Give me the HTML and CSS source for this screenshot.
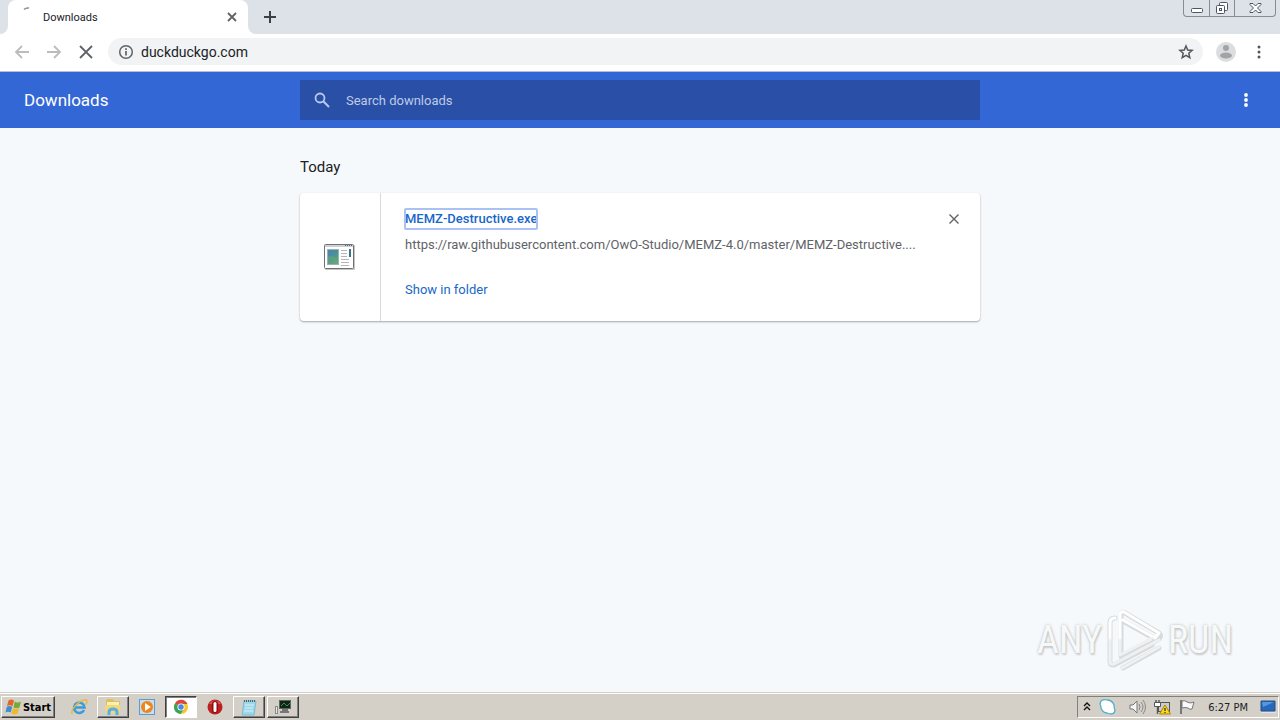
FILE: index.html
```html
<!DOCTYPE html>
<html lang="en">
<head>
    <meta charset="UTF-8">
    <meta name="viewport" content="width=device-width, initial-scale=1.0">
    <title>Downloads</title>
    <link rel="stylesheet" href="styles.css">
</head>
<body>
    <div class="tab-strip">
        <div class="tab-edge"></div>
        <div class="tab">
            <svg class="spinner" width="16" height="16" viewBox="0 0 16 16"><path d="M5 4.500Q7 2.500 10 3" fill="none" stroke="#8a8d91" stroke-width="1.500"/></svg>
            <span class="tab-title">Downloads</span>
            <button class="icon-button tab-close" aria-label="Close tab">
                <svg width="10" height="10" viewBox="0 0 10 10"><path d="M1 1l8 8M9 1l-8 8" stroke="#5f6368" stroke-width="1.800"/></svg>
            </button>
        </div>
        <div class="tab-edge right"></div>
        <button class="icon-button new-tab" aria-label="New tab">
            <svg width="12" height="12" viewBox="0 0 12 12"><path d="M6 0v12M0 6h12" stroke="#3c4043" stroke-width="2"/></svg>
        </button>
        <div class="window-controls">
            <button class="icon-button" aria-label="Minimize">
                <svg width="14" height="14" viewBox="0 0 14 14"><rect x="1.500" y="7.500" width="11" height="4" rx="1" fill="#fff" stroke="#4d5564"/></svg>
            </button>
            <button class="icon-button" aria-label="Restore">
                <svg width="14" height="14" viewBox="0 0 14 14" fill="#fff" stroke="#4d5564"><rect x="4.500" y="1.500" width="8" height="8" rx="1"/><rect x="1.500" y="4.500" width="8" height="8" rx="1"/><rect x="4.500" y="7.500" width="2" height="2"/></svg>
            </button>
            <button class="icon-button wide" aria-label="Close">
                <svg width="13" height="12" viewBox="0 0 13 12"><path d="M1 1.500h3l2.500 2.500L9 1.500h3v1L8.500 6l3.500 3.500v1H9L6.500 8 4 10.500H1v-1L4.500 6 1 2.500z" fill="#fff" stroke="#4d5564"/></svg>
            </button>
        </div>
    </div>

    <div class="toolbar">
        <button class="icon-button nav" aria-label="Back">
            <svg width="16" height="16" viewBox="0 0 16 16"><path d="M15 8H2M8 2L2 8l6 6" fill="none" stroke="#babcbe" stroke-width="1.800"/></svg>
        </button>
        <button class="icon-button nav" aria-label="Forward">
            <svg width="16" height="16" viewBox="0 0 16 16"><path d="M1 8h13M8 2l6 6-6 6" fill="none" stroke="#babcbe" stroke-width="1.800"/></svg>
        </button>
        <button class="icon-button nav" aria-label="Stop">
            <svg width="14" height="14" viewBox="0 0 14 14"><path d="M1 1l12 12M13 1L1 13" stroke="#5f6368" stroke-width="1.800"/></svg>
        </button>
        <div class="omnibox">
            <svg width="16" height="16" viewBox="0 0 16 16"><circle cx="8" cy="8" r="6.300" fill="none" stroke="#5f6368" stroke-width="1.500"/><path d="M8 7v4.500M8 4.200v1.700" stroke="#5f6368" stroke-width="1.700"/></svg>
            <input class="address" type="text" value="duckduckgo.com" aria-label="Address">
            <button class="icon-button" aria-label="Bookmark">
                <svg width="16" height="16" viewBox="0 0 16 16"><path d="M8 2l1.700 4 4.400.4-3.300 2.900 1 4.300L8 11.300l-3.800 2.300 1-4.300L1.900 6.400 6.300 6z" fill="none" stroke="#53575c" stroke-width="1.500"/></svg>
            </button>
        </div>
        <button class="icon-button" aria-label="Profile">
            <svg width="20" height="20" viewBox="0 0 20 20"><circle cx="10" cy="10" r="10" fill="#dcdddf"/><circle cx="10" cy="6" r="3" fill="#a1a3a6"/><ellipse cx="10" cy="13.500" rx="6" ry="3" fill="#a1a3a6"/></svg>
        </button>
        <button class="icon-button menu" aria-label="Browser menu">
            <svg width="4" height="14" viewBox="0 0 4 14" fill="#53575c"><circle cx="2" cy="2" r="1.500"/><circle cx="2" cy="7" r="1.500"/><circle cx="2" cy="12" r="1.500"/></svg>
        </button>
    </div>

    <header class="header">
        <h1>Downloads</h1>
        <div class="search">
            <svg width="16" height="16" viewBox="0 0 16 16"><circle cx="6" cy="6" r="4.500" fill="none" stroke="#b9c9ee" stroke-width="1.800"/><path d="M9.300 9.300L15 15" stroke="#b9c9ee" stroke-width="2"/></svg>
            <input type="search" placeholder="Search downloads" aria-label="Search downloads">
        </div>
        <div class="header-right">
            <button class="icon-button" aria-label="More actions">
                <svg width="4" height="14" viewBox="0 0 4 14" fill="#fff"><circle cx="2" cy="2" r="1.900"/><circle cx="2" cy="7" r="1.900"/><circle cx="2" cy="12" r="1.900"/></svg>
            </button>
        </div>
    </header>

    <main class="content">
        <h2>Today</h2>
        <div class="card">
            <div class="file-icon">
                <svg width="32" height="28" viewBox="0 0 32 28">
                    <defs><linearGradient id="screen" x1="0" y1="0" x2="1" y2="1"><stop offset="0" stop-color="#4a82b4"/><stop offset=".55" stop-color="#4b9390"/><stop offset="1" stop-color="#72b56b"/></linearGradient></defs>
                    <rect x="2" y="2" width="30" height="25" rx="1" fill="#c4c4c4"/>
                    <rect x="1.500" y="1.500" width="29" height="24" rx="1" fill="#fff" stroke="#6e7274"/>
                    <path d="M2 3h28" stroke="#cdd0d6" stroke-width="2"/>
                    <path d="M22 2.500h7" stroke="#5b6470" stroke-dasharray="1 1"/>
                    <rect x="4.500" y="6.500" width="11" height="15" fill="url(#screen)" stroke="#99b1b8"/>
                    <path d="M5 14c4-3 7 0 10 4v3H5z" fill="#67a779" opacity=".6"/>
                    <path d="M18 7.500h6M18 10.500h6M18 13.500h6M18 16.500h8M18 19.500h8M18 22.500h8" stroke="#b5b5b5"/>
                    <rect x="26" y="6" width="2" height="8" fill="#357688"/>
                </svg>
            </div>
            <div class="details">
                <div class="name-row">
                    <a class="file-name" href="#">MEMZ-Destructive.exe</a>
                    <button class="icon-button" aria-label="Remove from list">
                        <svg width="10" height="10" viewBox="0 0 10 10"><path d="M.5.5l9 9M9.500.5l-9 9" stroke="#5f6368" stroke-width="1.400"/></svg>
                    </button>
                </div>
                <div class="url">https://raw.githubusercontent.com/OwO-Studio/MEMZ-4.0/master/MEMZ-Destructive....</div>
                <a class="show" href="#">Show in folder</a>
            </div>
        </div>
        <div class="watermark">
            <span>ANY</span>
            <svg width="58" height="64" viewBox="0 0 58 64" fill="none" stroke-linejoin="round" stroke-linecap="round">
                <g stroke="#d8dbdd" stroke-width="5"><path d="M9 10q-5 0-5 5v39q0 3 4 3l38-20"/><path d="M15 48V7q0-4 4-2l34 20q3 3 0 6"/><path d="M17 13l34 19M16 50l34-17M17 60l36-20"/></g>
                <g stroke="#fff" stroke-width="3"><path d="M9 10q-5 0-5 5v17M14 32V7q0-4 4-3l35 21-4 5-32-18"/></g>
                <g stroke="#eef0f1" stroke-width="3"><path d="M4 32v22q0 3 4 2l45-24M14 32v15l32-17M16 60l37-21"/></g>
            </svg>
            <span>RUN</span>
        </div>
    </main>

    <footer class="taskbar">
        <button class="task start">
            <svg width="17" height="16" viewBox="0 0 17 16"><path d="M3.500 1.500q3-2 5.500 0L7.500 7.300Q5 5.500 2 7z" fill="#e66526"/><path d="M9.700 2.500q3 2 6.300 0l-1.500 6q-3 1.500-6 0z" fill="#72ad3b"/><path d="M1.700 8q3-2 5.500 0l-1.500 5.500Q3 12 .5 13.500z" fill="#3d8ed0"/><path d="M8 9.200q3 1.500 6.200 0l-1.700 5.500q-3 1.500-6 0z" fill="#f2b62d"/></svg>
            Start
        </button>
        <button class="task flat" aria-label="Internet Explorer">
            <svg width="18" height="18" viewBox="0 0 18 18" fill="none"><path d="M14 12A5.200 5.200 0 1 1 14.500 9.500H5" stroke="#3a9cdb" stroke-width="2.600"/><path d="M2.500 16C-1 13 9 2 15.500 1.800c2.500 0 1.500 3 0 5" stroke="#e9b83c" stroke-width="1.400"/></svg>
        </button>
        <button class="task" aria-label="Explorer">
            <svg width="18" height="18" viewBox="0 0 18 18"><path d="M2 3l1-2h6l1 2h6v12H2z" fill="#e3bd59"/><path d="M3 4h12v4H3z" fill="#fff1b3"/><path d="M1 7h15v8H2z" fill="#f2d77b"/><path d="M5 17v-3q0-3 4-3t4 3v3" fill="none" stroke="#5ab0dd" stroke-width="3"/></svg>
        </button>
        <button class="task flat" aria-label="Media Player">
            <svg width="16" height="16" viewBox="0 0 16 16"><rect x=".5" y=".5" width="15" height="15" fill="#c4dff5" stroke="#5a9dd3"/><circle cx="8" cy="8" r="6" fill="#f28519"/><path d="M6 4L11.800 8 6 12z" fill="#fff"/></svg>
        </button>
        <button class="task active" aria-label="Chrome">
            <svg width="16" height="16" viewBox="0 0 16 16"><circle cx="8" cy="8" r="7" fill="#f4c72d"/><path d="M8 8L2 4.400A7 7 0 0 1 14.500 5H8z" fill="#dc483b"/><path d="M8 8L2 4.400A7 7 0 0 0 7.500 15L11 10z" fill="#37a35a"/><circle cx="8" cy="8" r="3.600" fill="#fff"/><circle cx="8" cy="8" r="2.700" fill="#4687e8"/></svg>
        </button>
        <button class="task flat" aria-label="Opera">
            <svg width="16" height="16" viewBox="0 0 16 16"><circle cx="8" cy="8" r="7.500" fill="#bd2022"/><path d="M2 5a7 7 0 0 1 12 0" fill="#d8534f"/><rect x="5" y="2" width="6" height="12" rx="3" fill="#8a1014"/><rect x="6.500" y="3" width="3" height="10" rx="1.500" fill="#fff"/></svg>
        </button>
        <button class="task" aria-label="Notepad">
            <svg width="16" height="17" viewBox="0 0 16 17"><path d="M3 2h12l-2 14H1z" fill="#9cd8ea" stroke="#7dbccd"/><path d="M4 6h9M4 9h8M3 12h9" stroke="#d6f2f9"/><path d="M3 2h12" stroke="#49656f" stroke-width="2" stroke-dasharray="1 1"/></svg>
        </button>
        <button class="task" aria-label="System monitor">
            <svg width="18" height="16" viewBox="0 0 18 16"><rect x="5.500" y="1.500" width="11" height="8" fill="#112417" stroke="#5c655e"/><path d="M7 7l3-3 3 3 3-3" fill="none" stroke="#2a9a3e"/><path d="M8 10h6v2H8zM6 12h9v2H6z" fill="#777"/><rect x="1.500" y="7.500" width="2" height="7" fill="#e6e8e6" stroke="#8a8a8a"/></svg>
        </button>
        <div class="tray">
            <svg width="8" height="10" viewBox="0 0 8 10"><path d="M1 4l3-3 3 3M1 8l3-3 3 3" fill="none" stroke="#111" stroke-width="1.400"/></svg>
            <svg width="18" height="18" viewBox="0 0 18 18"><path d="M2 3q3-2 6-1 5 0 7 5 0 3 1 5 0 3-3 4-3 0-5-1-4 0-6-5 0-2-1-4z" fill="#fff" stroke="#51acd0" stroke-width="1.300"/></svg>
            <svg class="volume" width="17" height="16" viewBox="0 0 17 16"><path d="M1 6h3l4-4v12l-4-4H1z" fill="#f5f5f5" stroke="#777"/><path d="M10 5q2 3 0 6M12 3q4 5 0 10M14 1q5 7 0 14" fill="none" stroke="#888"/></svg>
            <svg width="17" height="16" viewBox="0 0 17 16"><rect x="4.500" y="3.500" width="11" height="9" fill="#c9ccce" stroke="#555"/><path d="M.5 3.500h6v4h-6z" fill="#fff" stroke="#555"/><path d="M2 1v2M5 1v2M3.500 8v7" fill="none" stroke="#555" stroke-width="1.400"/><path d="M11 6l5.500 9h-11z" fill="#ffd71f" stroke="#aa8500"/><path d="M11 9v3M11 13v1" stroke="#333" stroke-width="1.300"/></svg>
            <svg width="17" height="16" viewBox="0 0 17 16"><path d="M2 1v14" stroke="#777" stroke-width="2"/><path d="M3 2q3-1 5 1 3 2 7 0l-2 7q-2 1-4-1-3-1-6 0z" fill="#fafafa" stroke="#777"/></svg>
            <time class="clock">6:27 PM</time>
            <svg width="16" height="14" viewBox="0 0 16 14"><path d="M1 1h14v10H1z" fill="#2768bb" stroke="#244d88"/><path d="M2 2h12L3 7z" fill="#5599db"/><path d="M1 12.500h15" stroke="#dbe4ef"/></svg>
        </div>
    </footer>
</body>
</html>
```
FILE: styles.css
```css
* {
    margin: 0;
    padding: 0;
    box-sizing: border-box;
}

body {
    display: flex;
    flex-direction: column;
    min-height: 100vh;
    background: #f6f9fc;
    color: #202124;
    font-family: Roboto, sans-serif;
    font-size: 13px;
}

svg {
    display: block;
    flex: none;
}

a {
    color: #1967c8;
    text-decoration: none;
}

input {
    flex: 1;
    min-width: 0;
    border: 0;
    outline: 0;
    background: none;
    font-family: inherit;
}

.icon-button {
    display: flex;
    align-items: center;
    justify-content: center;
    border: 0;
    background: none;
}

/* browser chrome */
.tab-strip {
    display: flex;
    height: 34px;
    background: #dde1e8;
}

.tab-edge {
    width: 8px;
    background: #fff;
}

.tab-edge::before {
    content: "";
    display: block;
    height: 100%;
    border-radius: 0 0 8px 0;
    background: #dde1e8;
}

.tab-edge.right::before {
    border-radius: 0 0 0 8px;
}

.tab {
    display: flex;
    align-items: center;
    width: 240px;
    padding: 0 11px;
    border-radius: 8px 8px 0 0;
    background: #fff;
}

.spinner {
    margin-top: -8px;
}

.tab-title {
    flex: 1;
    padding-left: 8px;
    font-size: 11px;
}

.new-tab {
    width: 28px;
}

.window-controls {
    display: flex;
    height: 17px;
    margin-left: auto;
    margin-right: 4px;
    border: 1px solid #858b98;
    border-top: 0;
    border-radius: 0 0 4px 4px;
}

.window-controls button {
    width: 25px;
}

.window-controls button + button {
    border-left: 1px solid #858b98;
}

.window-controls .wide {
    width: 41px;
}

.toolbar {
    display: flex;
    align-items: center;
    height: 38px;
    padding: 0 12px 2px 6px;
    background: #fff;
    border-bottom: 1px solid #b8c0d0;
}

.nav {
    width: 32px;
    height: 28px;
}

.omnibox {
    display: flex;
    flex: 1;
    align-items: center;
    height: 27px;
    margin: 0 13px 0 6px;
    padding: 0 9px 0 10px;
    border-radius: 14px;
    background: #f1f3f5;
}

.address {
    padding-left: 7px;
    color: #202124;
    font-size: 14px;
}

.menu {
    width: 18px;
    margin-left: 14px;
}

/* downloads page */
.header {
    display: grid;
    grid-template-columns: 1fr 680px 1fr;
    align-items: center;
    height: 56px;
    padding: 0 24px;
    background: #3367d6;
    color: #fff;
}

.header h1 {
    font-size: 17px;
    font-weight: 400;
}

.search {
    display: flex;
    align-items: center;
    height: 40px;
    padding: 0 14px;
    background: #294fa7;
}

.search input {
    padding-left: 16px;
    color: #fff;
    font-size: 13px;
}

.search input::placeholder {
    color: #bfcbe5;
}

.header-right {
    display: flex;
    justify-content: flex-end;
    padding-right: 8px;
}

.content {
    display: flex;
    flex: 1;
    flex-direction: column;
    align-items: center;
    padding-top: 28px;
}

.content h2 {
    width: 680px;
    margin-bottom: 15px;
    font-size: 15px;
    font-weight: 400;
    line-height: 22px;
}

.card {
    display: flex;
    width: 680px;
    height: 128px;
    border-radius: 4px;
    background: #fff;
    box-shadow: 0 1px 2px rgba(60, 64, 67, 0.45);
}

.file-icon {
    display: flex;
    align-items: center;
    justify-content: center;
    width: 81px;
    padding-right: 2px;
    border-right: 1px solid #d9dbde;
}

.details {
    display: flex;
    flex: 1;
    flex-direction: column;
    align-items: flex-start;
    padding: 16px 21px 0 24px;
}

.name-row {
    display: flex;
    align-items: center;
    justify-content: space-between;
    width: 100%;
    height: 20px;
}

.file-name {
    border-radius: 1px;
    outline: 2px solid #a9c1f3;
    outline-offset: -1px;
    font-weight: 500;
    line-height: 20px;
}

.url {
    margin-top: 6px;
    color: #5f6368;
    line-height: 20px;
}

.show {
    margin-top: 25px;
    line-height: 20px;
}

.watermark {
    display: flex;
    align-items: center;
    align-self: flex-end;
    gap: 4px;
    margin: auto 47px 20px 0;
    color: #f7f8f8;
    font-family: "Roboto Condensed", "Liberation Sans Narrow", "Liberation Sans", sans-serif;
    font-size: 38px;
    text-shadow: 0 0 3px #b8bbbd, 1px 2px 2px #cdd0d2;
}

/* taskbar */
.taskbar {
    display: flex;
    align-items: center;
    height: 28px;
    padding: 1px 1px 0;
    border-top: 1px solid #d4d0c8;
    background: #d4d0c8;
    box-shadow: inset 0 1px #fff;
    font-family: "DejaVu Sans Condensed", "Liberation Sans", sans-serif;
    font-size: 11px;
}

.task {
    display: flex;
    align-items: center;
    justify-content: center;
    width: 32px;
    height: 22px;
    margin-right: 2px;
    border: 1px solid;
    border-color: #fff #404040 #404040 #fff;
    background: #d4d0c8;
    box-shadow: inset -1px -1px #808080;
    font: inherit;
}

.start {
    gap: 1px;
    width: 54px;
    margin-right: 8px;
    font-weight: 700;
}

.flat {
    border-color: transparent;
    background: none;
    box-shadow: none;
}

.active {
    border-color: #404040 #fff #fff #404040;
    background: #fff;
    box-shadow: inset 1px 1px #808080;
}

.tray {
    display: flex;
    align-items: center;
    height: 22px;
    margin-left: auto;
    padding: 0 2px 0 5px;
    gap: 8px;
    border: 1px solid;
    border-color: #808080 #fff #fff #808080;
}

.volume {
    margin-left: 4px;
}

.clock {
    margin: 0 4px;
}
```
